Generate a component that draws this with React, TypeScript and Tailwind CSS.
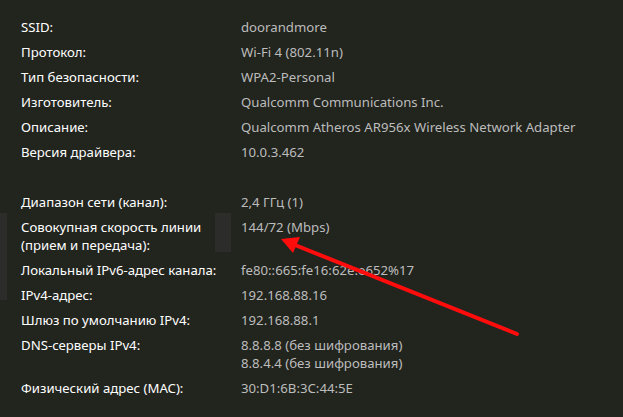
import React from "react";

type Row = { label: string[]; value: string[]; blank?: boolean; bar?: boolean };

const rows: Row[] = [
  { label: ["SSID:"], value: ["doorandmore"] },
  { label: ["Протокол:"], value: ["Wi-Fi 4 (802.11n)"] },
  { label: ["Тип безопасности:"], value: ["WPA2-Personal"] },
  { label: ["Изготовитель:"], value: ["Qualcomm Communications Inc."] },
  { label: ["Описание:"], value: ["Qualcomm Atheros AR956x Wireless Network Adapter"] },
  { label: ["Версия драйвера:"], value: ["10.0.3.462"] },
  { label: [""], value: [""], blank: true },
  { label: ["Диапазон сети (канал):"], value: ["2,4 ГГц (1)"] },
  { label: ["Совокупная скорость линии", "(прием и передача):"], value: ["144/72 (Mbps)"], bar: true },
  { label: ["Локальный IPv6-адрес канала:"], value: ["fe80::665:fe16:62e:e652%17"] },
  { label: ["IPv4-адрес:"], value: ["192.168.88.16"] },
  { label: ["Шлюз по умолчанию IPv4:"], value: ["192.168.88.1"] },
  { label: ["DNS-серверы IPv4:"], value: ["8.8.8.8 (без шифрования)", "8.8.4.4 (без шифрования)"] },
  { label: ["Физический адрес (MAC):"], value: ["30:D1:6B:3C:44:5E"] },
];

export default function App() {
  return (
    <div
      className="relative w-[623px] h-[417px] overflow-hidden bg-[#22241e] text-[13.2px] leading-[18px]"
      style={{ fontFamily: '"Noto Sans", "Open Sans", sans-serif' }}
    >
      <div className="flex flex-col gap-[7px] pt-[18px]">
        {rows.map((r, i) => (
          <div key={i} className="relative flex">
            {r.bar && (
              <div className="absolute left-0 top-[-5px] w-[7px] h-[87px] bg-[#2c2c2b]" />
            )}
            <div className="w-[241px] pl-[21px] text-white flex shrink-0 justify-between">
              <div className="flex flex-col">
                {r.label.map((l, j) => (
                  <span key={j} className="whitespace-nowrap min-h-[18px]">{l}</span>
                ))}
              </div>
              {r.bar && <div className="w-[16px] h-[39px] mt-[-5px] mr-[10px] bg-[#2c2c2b]" />}
            </div>
            <div className="flex flex-col text-[#bcbcbc]">
              {r.value.map((v, j) => (
                <span key={j} className="whitespace-nowrap min-h-[18px]">{v}</span>
              ))}
            </div>
          </div>
        ))}
      </div>
      <svg className="absolute left-0 top-0" width="623" height="417" viewBox="0 0 623 417">
        <line x1="517" y1="334" x2="295" y2="245" stroke="#ff0d0d" strokeWidth="4" strokeLinecap="round" />
        <polygon points="281,239 300,237 293,253" fill="#ff0d0d" />
      </svg>
    </div>
  );
}
